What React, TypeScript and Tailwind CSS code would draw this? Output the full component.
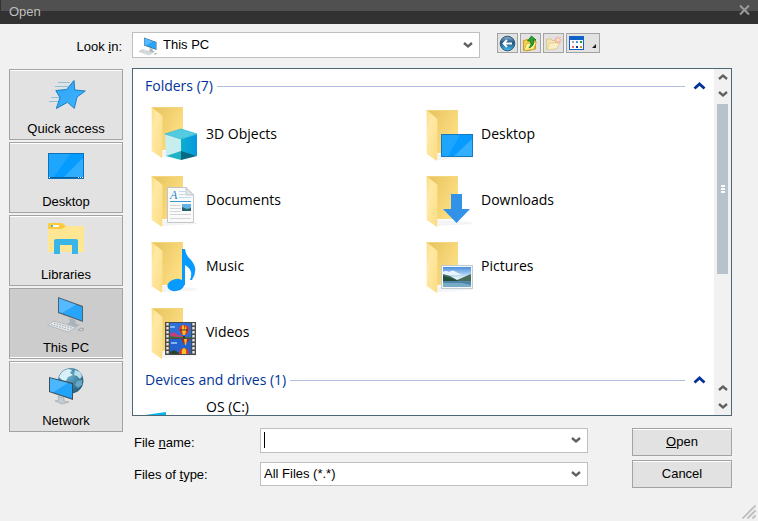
import type { ReactNode } from 'react'

interface ChevronProps {
  direction: 'up' | 'down'
  className?: string
}

function Chevron({ direction, className = 'text-[#606060]' }: ChevronProps) {
  return (
    <svg width="10" height="8" viewBox="0 0 10 8" className={className} aria-hidden="true">
      <path
        d={direction === 'up' ? 'M1 6 L5 2.6 L9 6' : 'M1 2 L5 5.4 L9 2'}
        fill="none"
        stroke="currentColor"
        strokeWidth="2.3"
      />
    </svg>
  )
}

/* Places bar icons */

function StarIcon() {
  return (
    <svg width="40" height="40" viewBox="0 0 40 40" aria-hidden="true">
      <defs>
        <linearGradient id="star" x1="0" y1="0" x2="1" y2="1">
          <stop offset="0" stopColor="#2fa4f5" />
          <stop offset="1" stopColor="#3fb4ff" />
        </linearGradient>
      </defs>
      <path d="M12 7.5H24M9 11.5H22M5 22.5H14M3 26.5H13" stroke="#8fc0dc" strokeWidth="1" />
      <path
        d="M28 5.5 L28.8 15 L39.3 16 L31 22 L28.3 33.3 L21.5 27.3 L10.3 33.5 L14 22.7 L9.8 15.5 L20.5 14.5 Z"
        fill="url(#star)"
        stroke="#1a7fc4"
        strokeWidth="1"
        strokeLinejoin="round"
      />
    </svg>
  )
}

function DesktopIcon() {
  return (
    <svg width="40" height="40" viewBox="0 0 40 40" aria-hidden="true">
      <rect x="2.5" y="5.5" width="35" height="25" fill="#069bff" stroke="#0d72b8" />
      <path d="M3 6H24L8 29H3Z" fill="#1ea6ff" />
      <path d="M37 10V29H18Z" fill="#2fadff" />
      <path d="M3 29.5H37" stroke="#0d5f9c" />
      <path d="M3 29.5H4M32 29.5H33M34 29.5H35M36 29.5H37" stroke="#fff" />
    </svg>
  )
}

function LibrariesIcon() {
  return (
    <svg width="40" height="40" viewBox="0 0 40 40" aria-hidden="true">
      <path d="M2 5H38V31H2Z" fill="#ffe693" />
      <path d="M2 3.5Q2 2 3.5 2H16L20 5L16 8H2Z" fill="#ffcb3d" />
      <rect x="5" y="4" width="8" height="2" fill="#fff" />
      <rect x="5" y="4" width="2" height="2" fill="#3ab5e8" />
      <path d="M8 20Q8 18 10 18H30Q32 18 32 20V33H26V24H14V33H8Z" fill="#3ab5e8" />
    </svg>
  )
}

function ComputerIcon({ size = 40 }: { size?: number }) {
  return (
    <svg width={size} height={size} viewBox="0 0 40 40" aria-hidden="true">
      <path d="M23 24L29 26L30 30L34 31L30 33L21 30L24 28Z" fill="#a9b3ba" />
      <path d="M12 3L37 12V28L12 19Z" fill="#4d6270" />
      <path d="M13 4.5L36 13V26.4L13 18Z" fill="#27a5f8" />
      <path d="M13 4.5L30 10.8L16 19L13 18Z" fill="#55baff" />
      <path d="M1.5 31L8 27L30 33.5L22 38Z" fill="#e4e8ea" stroke="#a9b2b8" strokeWidth="0.8" />
      <path
        d="M5 30.5L24 36M8 29L27 34.5"
        stroke="#9ba6ad"
        strokeWidth="1"
        strokeDasharray="1.6 1.2"
      />
      <path d="M32 36L35 34L38 35L36 37Z" fill="#cfd6da" stroke="#7e8990" strokeWidth="0.6" />
    </svg>
  )
}

function NetworkIcon() {
  return (
    <svg width="40" height="40" viewBox="0 0 40 40" aria-hidden="true">
      <defs>
        <radialGradient id="globe" cx="0.4" cy="0.3" r="0.7">
          <stop offset="0" stopColor="#6fb4d2" />
          <stop offset="1" stopColor="#23617f" />
        </radialGradient>
      </defs>
      <circle cx="24.7" cy="13.7" r="12.7" fill="url(#globe)" />
      <path d="M13 10Q16 3 22 2L26 3L24 6L27 8L22 10L20 14L16 13Z" fill="#d9f0f8" />
      <path d="M29 3L34 5L36 9L34 12L31 9L28 8Z" fill="#b9dfec" />
      <path d="M31 14L36 13L36 18L32 21L29 18Z" fill="#67a8c4" />
      <path d="M12 29L18 31V34L23 35L16 37L9 34L13 33Z" fill="#c4ccd1" stroke="#98a2a8" strokeWidth="0.6" />
      <path d="M3 10L27 16V33L3 25Z" fill="#3b4d59" />
      <path d="M4 11.3L26 16.9V31.5L4 24.2Z" fill="#22a3fa" />
      <path d="M4 11.3L22 15.9L7 25.2L4 24.2Z" fill="#4cb6ff" />
    </svg>
  )
}

/* Folder icons, each with its own overlay */

function FolderIcon({ raised = false, children }: { raised?: boolean; children: ReactNode }) {
  return (
    <svg width="48" height="54" viewBox="0 0 48 54" className="shrink-0" aria-hidden="true">
      <defs>
        <linearGradient id="folder-back" x1="0" y1="0" x2="1" y2="0.6">
          <stop offset="0" stopColor="#e6c25c" />
          <stop offset="1" stopColor="#fddf84" />
        </linearGradient>
        <linearGradient id="folder-front" x1="0" y1="0" x2="1" y2="1">
          <stop offset="0" stopColor="#fbdc80" />
          <stop offset="0.3" stopColor="#ffe9a6" />
          <stop offset="1" stopColor="#fbdc82" />
        </linearGradient>
      </defs>
      <g transform={raised ? 'translate(0 -3)' : undefined}>
        <path d="M11 53L47 51L44 49L11 47Z" fill="#f4f4f4" />
        <path d="M0.7 3H32V46H11Z" fill="url(#folder-back)" />
        <path d="M0.7 3L11.5 12V45L11 54L0.7 47Z" fill="url(#folder-front)" />
        <path d="M0.7 3.5H32" stroke="#f3d67d" />
      </g>
      {children}
    </svg>
  )
}

function ObjectsOverlay() {
  return (
    <g>
      <defs>
        <linearGradient id="cube-right" x1="0" y1="0" x2="1" y2="0">
          <stop offset="0" stopColor="#0cb0cf" />
          <stop offset="1" stopColor="#0596e0" />
        </linearGradient>
      </defs>
      <path d="M14 27L30 22L46 27L30 32Z" fill="#55cbe0" />
      <path d="M14 27L30 32V45L15 49Z" fill="#c6eeee" />
      <path d="M46 27L30 32V45L46 49Z" fill="url(#cube-right)" />
      <path d="M15 49L30 44V53Z" fill="#1fb3c6" />
      <path d="M46 49L30 44V53Z" fill="#066a84" />
      <path d="M14 27L30 22L46 27L30 32Z" fill="none" stroke="#35bcd8" strokeWidth="0.8" />
    </g>
  )
}

function DesktopOverlay() {
  return (
    <g>
      <rect x="15.5" y="27.5" width="31" height="22" fill="#079bff" stroke="#1479be" />
      <path d="M16 28H34L22 49H16Z" fill="#1ea6ff" />
      <path d="M46 32V49H28Z" fill="#32afff" />
    </g>
  )
}

function DocumentsOverlay() {
  return (
    <g>
      <path d="M16.5 14.5H35L42.5 22V49.5H16.5Z" fill="#fafafa" stroke="#c3c6c9" />
      <path d="M35 14.5V22H42.5Z" fill="#e1e4e6" stroke="#c3c6c9" />
      <text x="19" y="26" className="fill-[#1d87c8] font-['Liberation_Serif',serif] text-[12px] italic">
        A
      </text>
      <path d="M28 18.5H34M28 21.5H34M28 24.5H40" stroke="#bcdcf0" />
      <path d="M19 28.5H40" stroke="#3b99cf" />
      <path d="M19 32.5H30M19 35.5H30M19 38.5H30M19 41.5H40M19 45.5H40" stroke="#d3d5d8" />
      <rect x="31" y="31" width="9" height="7" fill="#65b3e6" />
      <path d="M31 34L36 36L40 35V38H31Z" fill="#27626b" />
    </g>
  )
}

function DownloadsOverlay() {
  return <path d="M25 21H36V36H44L30.5 50L17 36H25Z" fill="#3292e8" />
}

function MusicOverlay() {
  return (
    <g fill="#079bff">
      <ellipse cx="25" cy="46" rx="8.7" ry="6" transform="rotate(-14 25 46)" />
      <path d="M31 10H34Q35 17 40 21Q48 30 41 41H39Q43 31 34 26V46H31Z" />
    </g>
  )
}

function PicturesOverlay() {
  return (
    <g>
      <defs>
        <linearGradient id="sky" x1="0" y1="0" x2="0" y2="1">
          <stop offset="0" stopColor="#4a8fe0" />
          <stop offset="0.55" stopColor="#e0f0fb" />
        </linearGradient>
      </defs>
      <rect x="15.5" y="26.5" width="31" height="23" fill="#f5f7f8" stroke="#c3cbd0" />
      <rect x="17" y="28" width="28" height="20" fill="url(#sky)" />
      <path d="M17 33Q20 31 23 33Q27 30 30 33L36 36H17Z" fill="#e8f3fb" />
      <path d="M17 35L24 37L31 41L38 38L45 35V42H17Z" fill="#466d58" />
      <path d="M17 37L25 39L33 42H17Z" fill="#214c3a" />
      <rect x="17" y="42" width="28" height="6" fill="#4d86a8" />
      <path d="M17 44H36L45 46V48H17Z" fill="#78abc6" />
    </g>
  )
}

function Balloon({ x, y }: { x: number; y: number }) {
  return (
    <g transform={`translate(${x} ${y})`}>
      <path d="M0 4Q0 0 5 0T10 4Q10 7 7 10H3Q0 7 0 4Z" fill="#d8392b" />
      <path d="M3 0.5H5V10H4Q2 5 3 0.5ZM7 0.5Q8 5 6 10H5V5Z" fill="#f6c52c" />
      <path d="M1 5L9 5" stroke="#43281f" />
      <rect x="4" y="11" width="2" height="2" fill="#4d2e18" />
    </g>
  )
}

function VideosOverlay() {
  return (
    <g>
      <rect x="14" y="17" width="31" height="33" fill="#4a4a4a" />
      <rect x="19" y="18" width="21" height="15" fill="#2d6fda" />
      <rect x="19" y="34" width="21" height="15" fill="#2462cd" />
      <path d="M16.5 18V50M42.5 18V50" stroke="#e6e6e6" strokeWidth="2.4" strokeDasharray="2.4 1.6" />
      <path d="M19 29L23 27L27 30L32 31V33H19Z" fill="#c63e74" />
      <path d="M19 31L25 32H40V33H19Z" fill="#2e7840" />
      <path d="M19 21H24V23H19ZM20 37H26V39H20Z" fill="#7fb5f5" />
      <Balloon x={28} y={20} />
      <path d="M30 34H39L35 39H33Z" fill="#a62c2c" />
      <path d="M33 34H36L35 40H34Z" fill="#f0bd2a" />
      <path d="M28 49Q28 43 33 43T38 49Z" fill="#d8392b" />
      <path d="M31 49Q30 44 33 43Q36 44 35 49Z" fill="#f6c52c" />
      <path d="M19 47L23 45L28 48V49H19Z" fill="#27452c" />
    </g>
  )
}

/* Toolbar icons */

function BackIcon() {
  return (
    <svg width="17" height="17" viewBox="0 0 17 17" aria-hidden="true">
      <defs>
        <linearGradient id="back" x1="0" y1="0" x2="0" y2="1">
          <stop offset="0" stopColor="#8fb4d0" />
          <stop offset="0.45" stopColor="#1d5484" />
          <stop offset="1" stopColor="#42c4f2" />
        </linearGradient>
      </defs>
      <circle cx="8.5" cy="8.5" r="7.3" fill="url(#back)" stroke="#2c5577" />
      <path d="M13 8.5H5M8 5L4.5 8.5L8 12" fill="none" stroke="#fff" strokeWidth="1.9" />
    </svg>
  )
}

function UpFolderIcon() {
  return (
    <svg width="17" height="17" viewBox="0 0 17 17" aria-hidden="true">
      <path d="M1.5 15.5V5.5L6 4.5L7 6L13.5 5V14L5 15.8Z" fill="#f5d452" stroke="#c99a1d" />
      <path d="M2 15.5L4.5 8.5L14.5 7L11.5 14.3Z" fill="#fff09a" stroke="#d3a82c" strokeWidth="0.8" />
      <path d="M7 13Q10 10 8.5 6H5.5L9.5 1L14 5H11.6Q12.5 11 7 13Z" fill="#27a52f" stroke="#14701d" strokeWidth="0.8" />
    </svg>
  )
}

function NewFolderIcon() {
  return (
    <svg width="17" height="17" viewBox="0 0 17 17" aria-hidden="true">
      <path d="M1.5 14.5V4.5L6 3.5L7 5.5L12.5 5V13.5Z" fill="#f1e3b0" stroke="#dcc88d" />
      <path d="M2 14.8L4.5 8.5L15 7L12 13.7Z" fill="#f9efc6" stroke="#dfcb90" strokeWidth="0.8" />
      <path d="M13 1V9M9 5H17M10.2 2.2L15.8 7.8M15.8 2.2L10.2 7.8" stroke="#f4a48f" />
      <circle cx="13" cy="5" r="1.5" fill="#ffe3d6" />
    </svg>
  )
}

function ViewMenuIcon() {
  return (
    <svg width="32" height="18" viewBox="0 0 32 18" aria-hidden="true">
      <rect x="2.5" y="2.5" width="14" height="13" fill="#fff" stroke="#1164c4" />
      <rect x="2" y="2" width="15" height="4" fill="#0f62c6" />
      <path d="M5 7H7V9H5Z" fill="#a8a0c8" />
      <path d="M9 7H11V9H9Z" fill="#4b8fd6" />
      <path d="M13 7H15V9H13Z" fill="#1d9638" />
      <path d="M5 12H7V14H5Z" fill="#f0705a" />
      <path d="M9 12H11V14H9Z" fill="#12358f" />
      <path d="M13 12H15V14H13Z" fill="#c29a1c" />
      <path d="M29 10V14H25Z" fill="#1b1b1b" />
    </svg>
  )
}

const places = [
  { label: 'Quick access', icon: <StarIcon /> },
  { label: 'Desktop', icon: <DesktopIcon /> },
  { label: 'Libraries', icon: <LibrariesIcon /> },
  { label: 'This PC', icon: <ComputerIcon />, selected: true },
  { label: 'Network', icon: <NetworkIcon /> },
]

const folders = [
  { label: '3D Objects', overlay: <ObjectsOverlay />, raised: true },
  { label: 'Desktop', overlay: <DesktopOverlay /> },
  { label: 'Documents', overlay: <DocumentsOverlay /> },
  { label: 'Downloads', overlay: <DownloadsOverlay /> },
  { label: 'Music', overlay: <MusicOverlay /> },
  { label: 'Pictures', overlay: <PicturesOverlay /> },
  { label: 'Videos', overlay: <VideosOverlay /> },
]

const tools = [
  { label: 'Back', icon: <BackIcon />, width: 'w-[21px]' },
  { label: 'Up one level', icon: <UpFolderIcon />, width: 'w-[21px]' },
  { label: 'New folder', icon: <NewFolderIcon />, width: 'w-[21px]' },
  { label: 'View menu', icon: <ViewMenuIcon />, width: 'w-[34px]' },
]

function GroupHeader({ title }: { title: string }) {
  return (
    <button type="button" className="flex h-[30px] w-full items-center pl-3 pr-2 text-[#003399]">
      <span>{title}</span>
      <span className="ml-1 mr-2 h-px flex-1 bg-[#b0bedf]" />
      <svg width="13" height="10" viewBox="0 0 13 10" aria-hidden="true">
        <path d="M1.5 7.5L6.5 3L11.5 7.5" fill="none" stroke="currentColor" strokeWidth="2.8" />
      </svg>
    </button>
  )
}

function ScrollBar() {
  return (
    <div className="flex w-[17px] shrink-0 flex-col bg-[#f1f1f1]">
      <button type="button" aria-label="Scroll up" className="flex h-4 items-center justify-center">
        <Chevron direction="up" />
      </button>
      <button type="button" aria-label="Scroll down" className="flex h-[18px] items-center justify-center">
        <Chevron direction="down" />
      </button>
      <div className="flex-1 px-[3px] pt-px">
        <div className="flex h-[170px] flex-col items-center justify-center gap-px bg-[#b7c2cd]">
          <span className="h-0.5 w-1 bg-white" />
          <span className="h-0.5 w-1 bg-white" />
          <span className="h-0.5 w-1 bg-white" />
        </div>
      </div>
      <button type="button" aria-label="Line up" className="flex h-[18px] items-center justify-center">
        <Chevron direction="up" />
      </button>
      <button type="button" aria-label="Line down" className="flex h-[18px] items-center justify-center">
        <Chevron direction="down" />
      </button>
    </div>
  )
}

function ActionButton({ children }: { children: ReactNode }) {
  return (
    <button
      type="button"
      className="h-7 w-[100px] border border-[#a3a3a3] bg-[#e2e2e2] shadow-[inset_0_1px_0_#ffffff]"
    >
      {children}
    </button>
  )
}

export default function App() {
  return (
    <div className="flex h-screen flex-col bg-[#f1f1f1] font-['Liberation_Sans',Arial,sans-serif] text-[13px] text-black">
      <header className="flex h-6 shrink-0 items-start justify-between border-l border-[#333333] bg-linear-to-b from-[#505050] from-[11px] to-[#323232] to-[11px] pl-2 pr-[7px] text-[#bfbfbf]">
        <h1 className="leading-6">Open</h1>
        <button type="button" aria-label="Close" className="pt-1">
          <svg width="13" height="13" viewBox="0 0 13 13" aria-hidden="true">
            <path d="M2 1.5L11 10.5M11 1.5L2 10.5" stroke="#9b9b9b" strokeWidth="2" />
          </svg>
        </button>
      </header>

      <main className="flex min-h-0 flex-1 flex-col pl-[9px] pr-[26px] pt-2">
        <div className="flex items-center">
          <label htmlFor="look-in" className="mr-2.5 w-[113px] pt-1 text-right">
            Look <u>i</u>n:
          </label>
          <div className="relative w-[348px]">
            <select
              id="look-in"
              className="h-[26px] w-full appearance-none border border-[#bfbfbf] bg-white pl-[30px]"
            >
              <option>This PC</option>
            </select>
            <span className="pointer-events-none absolute left-1.5 top-1">
              <ComputerIcon size={20} />
            </span>
            <span className="pointer-events-none absolute right-[7px] top-[9px]">
              <Chevron direction="down" />
            </span>
          </div>
          <div className="mb-1 ml-[17px] flex gap-0.5">
            {tools.map((tool) => (
              <button
                key={tool.label}
                type="button"
                aria-label={tool.label}
                className={`flex h-5 items-center justify-center border border-[#a3a3a3] bg-[#e2e2e2] ${tool.width}`}
              >
                {tool.icon}
              </button>
            ))}
          </div>
        </div>

        <div className="mt-2.5 flex min-h-0 flex-1 gap-[9px]">
          {/* Places bar */}
          <nav className="flex w-[114px] shrink-0 flex-col gap-0.5 pt-px">
            {places.map((place) => (
              <button
                key={place.label}
                type="button"
                className={`flex h-[71px] shrink-0 flex-col items-center border border-[#a3a3a3] pt-[5px] ${
                  place.selected
                    ? 'bg-[#cccccc] shadow-[inset_0_-1px_0_#ffffff]'
                    : 'bg-[#e2e2e2] shadow-[inset_0_1px_0_#ffffff]'
                }`}
              >
                {place.icon}
                <span className="mt-1 leading-5">{place.label}</span>
              </button>
            ))}
          </nav>

          <div className="flex min-w-0 flex-1 flex-col">
            {/* File list */}
            <div className="flex min-h-0 flex-1 overflow-hidden border border-[#4d6777] bg-white font-['Open_Sans','Noto_Sans',sans-serif] text-sm">
              <div className="min-w-0 flex-1 overflow-hidden pt-0.5">
                <GroupHeader title="Folders (7)" />
                <ul className="grid grid-cols-2 pl-[18px] pr-[13px]">
                  {folders.map((folder) => (
                    <li key={folder.label} className="flex h-[66px] items-center gap-[7px]">
                      <FolderIcon raised={folder.raised}>{folder.overlay}</FolderIcon>
                      <span>{folder.label}</span>
                    </li>
                  ))}
                </ul>
                <GroupHeader title="Devices and drives (1)" />
                <div className="flex gap-[13px] pl-3">
                  <svg width="48" height="54" viewBox="0 0 48 54" className="shrink-0" aria-hidden="true">
                    <path d="M0 20L21 17V27H0Z" fill="#06b4ea" />
                  </svg>
                  <span className="pt-0.5">OS (C:)</span>
                </div>
              </div>
              <ScrollBar />
            </div>

            <div className="mt-3 flex shrink-0 justify-between">
              <div className="mr-11 flex flex-1 flex-col gap-[9px] pl-0.5">
                <div className="flex items-center">
                  <label htmlFor="file-name" className="w-[126px] pt-1">
                    File <u>n</u>ame:
                  </label>
                  <div className="relative flex-1">
                    <input
                      id="file-name"
                      type="text"
                      className="block h-[25px] w-full border border-[#bfbfbf] bg-white pl-1"
                    />
                    <span className="absolute left-1 top-1 h-4 w-px bg-black" />
                    <span className="pointer-events-none absolute right-[7px] top-2">
                      <Chevron direction="down" />
                    </span>
                  </div>
                </div>
                <div className="flex items-center">
                  <label htmlFor="file-type" className="w-[126px] pt-0.5">
                    Files of <u>t</u>ype:
                  </label>
                  <div className="relative flex-1">
                    <select
                      id="file-type"
                      className="block h-6 w-full appearance-none border border-[#bfbfbf] bg-white pl-[3px]"
                    >
                      <option>All Files (*.*)</option>
                    </select>
                    <span className="pointer-events-none absolute right-[7px] top-2">
                      <Chevron direction="down" />
                    </span>
                  </div>
                </div>
              </div>
              <div className="flex flex-col gap-1">
                <ActionButton>
                  <u>O</u>pen
                </ActionButton>
                <ActionButton>Cancel</ActionButton>
              </div>
            </div>
          </div>
        </div>
      </main>

      <footer className="flex h-[33px] shrink-0 items-end justify-end pb-0.5 pr-0.5">
        <svg width="14" height="14" viewBox="0 0 14 14" aria-hidden="true">
          <path d="M0.5 13.5L13.5 0.5M5.5 13.5L13.5 5.5M10.5 13.5L13.5 10.5" stroke="#bdbdbd" strokeWidth="1.8" />
        </svg>
      </footer>
    </div>
  )
}
